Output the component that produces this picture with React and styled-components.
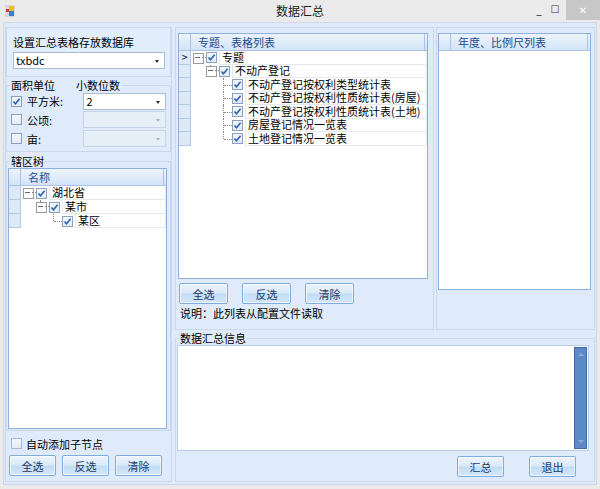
import React from 'react';
import styled, { createGlobalStyle } from 'styled-components';

const GlobalStyle = createGlobalStyle`
  html, body {
    margin: 0;
    padding: 0;
    background: #ebebeb;
  }
  * {
    box-sizing: border-box;
  }
  body {
    font-family: "Noto Sans CJK SC", "Liberation Sans", sans-serif;
    font-size: 11px;
    color: #000;
  }
`;

const Window = styled.div`
  width: 600px;
  height: 489px;
  background: #ebebeb;
  display: flex;
  flex-direction: column;
  padding: 0 3px 4px 3px;
  overflow: hidden;
`;

const TitleBar = styled.div`
  height: 22px;
  display: flex;
  align-items: center;
  position: relative;
  margin: 0 -3px;
  padding-left: 5px;
`;

const Title = styled.div`
  position: absolute;
  left: 0;
  right: 0;
  text-align: center;
  font-size: 12px;
  line-height: 22px;
  color: #222;
  pointer-events: none;
`;

const Controls = styled.div`
  margin-left: auto;
  display: flex;
  align-items: flex-start;
  height: 22px;
`;

const CtrlButton = styled.div`
  width: ${p => p.$wide ? '34px' : '16px'};
  height: ${p => p.$wide ? '20px' : '18px'};
  margin-left: ${p => p.$wide ? '3px' : '0'};
  background: ${p => p.$wide ? '#c7c7c7' : 'transparent'};
  display: flex;
  align-items: center;
  justify-content: center;
  color: ${p => p.$wide ? '#fff' : '#333'};
  font-family: "DejaVu Sans", sans-serif;
  font-size: 10px;
`;

const Client = styled.div`
  flex: 1;
  background: #dfebfa;
  border: 1px solid #cfd9e6;
  display: flex;
  gap: 3px;
  padding: 4px 1px 2px 1px;
`;

const LeftCol = styled.div`
  width: 167px;
  display: flex;
  flex-direction: column;
  border: 1px solid #cbd8ea;
  border-top: none;
  padding: 0 0 5px 0;
`;

const Panel = styled.div`
  border: 1px solid #cbd8ea;
  background: #e3eefc;
  padding: 7px 7px 7px 6px;
  display: flex;
  flex-direction: column;
  gap: 3px;
`;

const Label = styled.div`
  line-height: 14px;
  white-space: nowrap;
`;

const Combo = styled.div`
  height: 17px;
  width: ${p => p.$width || 'auto'};
  background: ${p => p.$disabled ? '#e6eef8' : '#fff'};
  border: 1px solid ${p => p.$disabled ? '#c6d4e6' : '#a9bcd6'};
  display: flex;
  align-items: center;
  padding-left: 2px;
  font-size: 11px;
  line-height: 15px;
  position: relative;

  &::after {
    content: '';
    position: absolute;
    right: 5px;
    top: 7px;
    border-left: 2.5px solid transparent;
    border-right: 2.5px solid transparent;
    border-top: 3px solid ${p => p.$disabled ? '#a9b6c8' : '#2a2a2a'};
  }
`;

const Field = styled.fieldset`
  margin: ${p => p.$mt || '0'} 0 0 0;
  border: 1px solid #cbd8ea;
  padding: ${p => p.$pad || '2px 4px 4px 4px'};
  min-width: 0;
  display: flex;
  flex-direction: column;
  flex: ${p => p.$grow ? 1 : 'none'};
`;

const Legend = styled.legend`
  padding: 0 1px;
  margin-left: ${p => p.$ml ?? 2}px;
  line-height: 14px;
  display: flex;
  gap: 21px;
`;

const UnitRow = styled.div`
  height: ${p => p.$h || '18px'};
  display: flex;
  align-items: center;
`;

const UnitLabel = styled.span`
  width: 66px;
  padding-left: 5px;
  line-height: 14px;
  white-space: nowrap;
`;

const Check = styled.span`
  width: 11px;
  height: 11px;
  flex: none;
  border: 1px solid ${p => p.$light ? '#a7bad3' : '#8aa0bd'};
  background: linear-gradient(#f4f7fb, #e4ebf4);
  display: inline-flex;
  align-items: center;
  justify-content: center;
`;

const Grid = styled.div`
  flex: 1;
  background: #fff;
  border: 1px solid #8eb0dc;
  display: flex;
  flex-direction: column;
  margin: ${p => p.$m || '0'};
  overflow: hidden;
`;

const GridHeader = styled.div`
  height: ${p => p.$h || '17px'};
  display: flex;
  flex: none;
  background: linear-gradient(#edf4fc, #d3e3f7);
  border-bottom: 1px solid #a9c3e6;
`;

const HeaderCorner = styled.div`
  width: 12px;
  border-right: 1px solid #a9c3e6;
  flex: none;
`;

const HeaderCell = styled.div`
  flex: 1;
  color: #1d4c8c;
  line-height: 16px;
  padding-left: 7px;
  border-right: 1px solid #a9c3e6;
  margin-right: 2px;
`;

const Row = styled.div`
  height: ${p => p.$h};
  display: flex;
  flex: none;
`;

const RowHead = styled.div`
  width: 12px;
  flex: none;
  background: #dde9f9;
  border-right: 1px solid #b3c9e7;
  border-bottom: 1px solid #b3c9e7;
  display: flex;
  align-items: center;
  justify-content: center;
  font-family: "DejaVu Sans", sans-serif;
  font-size: 8px;
  color: #2a3c5c;
  font-weight: bold;
`;

const NodeArea = styled.div`
  flex: 1;
  display: flex;
  align-items: center;
  padding-left: ${p => 2 + p.$level * 13}px;
  position: relative;
`;

const Expander = styled.span`
  width: 13px;
  height: 100%;
  flex: none;
  position: relative;

  &::before {
    content: '';
    position: absolute;
    left: 0;
    top: 50%;
    width: 9px;
    height: 9px;
    margin-top: -5px;
    border: 1px solid #9a9a9a;
    background: #fff;
  }
  &::after {
    content: '';
    position: absolute;
    left: 2px;
    top: 50%;
    width: 5px;
    height: 1px;
    margin-top: -1px;
    background: #666;
  }
`;

const ExpDash = styled.span`
  position: absolute;
  left: 9px;
  top: 50%;
  width: 4px;
  margin-top: -1px;
  border-top: 1px dotted #888;
`;

const ExpUp = styled.span`
  position: absolute;
  left: 4px;
  top: 0;
  height: calc(50% - 5px);
  border-left: 1px dotted #888;
`;

const Connector = styled.span`
  width: 13px;
  height: 100%;
  flex: none;
  position: relative;

  &::before {
    content: '';
    position: absolute;
    left: 4px;
    top: 0;
    height: ${p => p.$last ? '50%' : '100%'};
    border-left: 1px dotted #888;
  }
  &::after {
    content: '';
    position: absolute;
    left: 5px;
    top: 50%;
    width: 8px;
    border-top: 1px dotted #888;
  }
`;

const NodeText = styled.div`
  flex: 1;
  height: 100%;
  margin-left: 2px;
  padding-left: 2px;
  display: flex;
  align-items: center;
  border: 1px solid #e4e9f0;
  border-top: none;
  white-space: nowrap;
  line-height: 11px;
`;

const CheckRow = styled.div`
  display: flex;
  align-items: center;
  gap: 4px;
  padding: 6px 0 0 5px;
  height: 19px;
  line-height: 14px;
`;

const ButtonRow = styled.div`
  display: flex;
  gap: ${p => p.$gap || '6px'};
  justify-content: ${p => p.$end ? 'flex-end' : 'flex-start'};
  padding: ${p => p.$pad || '0'};
`;

const Button = styled.div`
  width: ${p => p.$w || '47px'};
  height: 21px;
  border: 1px solid #7fabde;
  border-radius: 2px;
  background: linear-gradient(#eef5fd 0%, #dbe9f9 45%, #c3dcf6 55%, #d4e8fb 100%);
  box-shadow: inset 0 0 0 1px rgba(255, 255, 255, 0.6);
  display: flex;
  align-items: center;
  justify-content: center;
  color: #1c3a6a;
  font-size: 11px;
  line-height: 14px;
`;

const RightArea = styled.div`
  flex: 1;
  display: flex;
  flex-direction: column;
`;

const TopRow = styled.div`
  display: flex;
  gap: 2px;
  height: 303px;
  flex: none;
`;

const MidPanel = styled.div`
  width: 259px;
  border: 1px solid #cbd8ea;
  display: flex;
  flex-direction: column;
`;

const SidePanel = styled.div`
  flex: 1;
  border: 1px solid #cbd8ea;
  display: flex;
  flex-direction: column;
`;

const Note = styled.div`
  line-height: 14px;
  padding: 2px 0 9px 4px;
`;

const InfoBox = styled.div`
  height: 106px;
  background: #fff;
  border: 1px solid #b9cde6;
  display: flex;
  justify-content: flex-end;
  padding: 1px;
`;

const ScrollBar = styled.div`
  width: 13px;
  background: #5d89c6;
  border: 1px solid #3f69a6;
  display: flex;
  flex-direction: column;
  justify-content: space-between;
  align-items: center;
  padding: 5px 0;
`;

const Arrow = styled.span`
  width: 0;
  height: 0;
  border-left: 3px solid transparent;
  border-right: 3px solid transparent;
  ${p => p.$down
    ? 'border-top: 3px solid #8eacd8;'
    : 'border-bottom: 3px solid #8eacd8;'}
`;

const CheckMark = () => (
  <svg width="9" height="9" viewBox="0 0 9 9">
    <path d="M1.5 4.5 L3.5 6.8 L7.6 1.8" fill="none" stroke="#2c62b3" strokeWidth="1.6" />
  </svg>
);

const Box = ({ checked, light }) => (
  <Check $light={light}>{checked && <CheckMark />}</Check>
);

const AppIcon = () => (
  <svg width="10" height="12" viewBox="0 0 10 12">
    <rect x="0" y="0" width="10" height="12" fill="#d8d8d8" />
    <rect x="1" y="4" width="3" height="3" fill="#d23a2a" />
    <rect x="4" y="1" width="5" height="5" fill="#f2c21c" />
    <rect x="4" y="6" width="5" height="5" fill="#3a7bd5" />
  </svg>
);

const TreeNode = ({ level, label, kind, arrow, h }) => (
  <Row $h={h}>
    <RowHead>{arrow ? '>' : ''}</RowHead>
    <NodeArea $level={level}>
      {kind === 'leaf' || kind === 'last' ? (
        <Connector $last={kind === 'last'} />
      ) : (
        <Expander>
          {level > 0 && <ExpUp />}
          <ExpDash />
        </Expander>
      )}
      <Box checked />
      <NodeText>{label}</NodeText>
    </NodeArea>
  </Row>
);

const regionTree = [
  { level: 0, label: '湖北省', kind: 'open' },
  { level: 1, label: '某市', kind: 'open' },
  { level: 2, label: '某区', kind: 'last' },
];

const tableTree = [
  { level: 0, label: '专题', kind: 'open', arrow: true },
  { level: 1, label: '不动产登记', kind: 'open' },
  { level: 2, label: '不动产登记按权利类型统计表', kind: 'leaf' },
  { level: 2, label: '不动产登记按权利性质统计表(房屋)', kind: 'leaf' },
  { level: 2, label: '不动产登记按权利性质统计表(土地)', kind: 'leaf' },
  { level: 2, label: '房屋登记情况一览表', kind: 'leaf' },
  { level: 2, label: '土地登记情况一览表', kind: 'last' },
];

export default function App() {
  return (
    <>
      <GlobalStyle />
      <Window>
        <TitleBar>
          <AppIcon />
          <Title>数据汇总</Title>
          <Controls>
            <CtrlButton>_</CtrlButton>
            <CtrlButton>☐</CtrlButton>
            <CtrlButton $wide>✕</CtrlButton>
          </Controls>
        </TitleBar>
        <Client>
          <LeftCol>
            <Panel>
              <Label>设置汇总表格存放数据库</Label>
              <Combo $width="152px">txbdc</Combo>
            </Panel>
            <Field $mt="1px" $pad="0 4px 3px 4px">
              <Legend $ml={-1}>
                <span>面积单位</span>
                <span>小数位数</span>
              </Legend>
              <UnitRow>
                <Box checked />
                <UnitLabel>平方米:</UnitLabel>
                <Combo $width="89px">2</Combo>
              </UnitRow>
              <UnitRow $h="19px">
                <Box />
                <UnitLabel>公顷:</UnitLabel>
                <Combo $width="89px" $disabled />
              </UnitRow>
              <UnitRow $h="19px">
                <Box />
                <UnitLabel>亩:</UnitLabel>
                <Combo $width="89px" $disabled />
              </UnitRow>
            </Field>
            <Field $mt="2px" $grow $pad="0 3px 1px 1px">
              <Legend>
                <span>辖区树</span>
              </Legend>
              <Grid>
                <GridHeader>
                  <HeaderCorner />
                  <HeaderCell>名称</HeaderCell>
                </GridHeader>
                {regionTree.map(n => (
                  <TreeNode key={n.label} h="14px" {...n} />
                ))}
              </Grid>
            </Field>
            <CheckRow>
              <Box light />
              <span>自动添加子节点</span>
            </CheckRow>
            <ButtonRow $pad="5px 0 0 3px">
              <Button>全选</Button>
              <Button>反选</Button>
              <Button>清除</Button>
            </ButtonRow>
          </LeftCol>
          <RightArea>
            <TopRow>
              <MidPanel>
                <Grid $m="5px 5px 0 2px">
                  <GridHeader>
                    <HeaderCorner />
                    <HeaderCell>专题、表格列表</HeaderCell>
                  </GridHeader>
                  {tableTree.map(n => (
                    <TreeNode key={n.label} h="13.5px" {...n} />
                  ))}
                </Grid>
                <ButtonRow $gap="14px" $pad="4px 0 0 3px">
                  <Button $w="49px">全选</Button>
                  <Button $w="49px">反选</Button>
                  <Button $w="49px">清除</Button>
                </ButtonRow>
                <Note>说明：此列表从配置文件读取</Note>
              </MidPanel>
              <SidePanel>
                <Grid $m="5px 3px 39px 1px">
                  <GridHeader>
                    <HeaderCorner />
                    <HeaderCell>年度、比例尺列表</HeaderCell>
                  </GridHeader>
                </Grid>
              </SidePanel>
            </TopRow>
            <Field $mt="1px" $grow $pad="0 5px 4px 1px">
              <Legend>
                <span>数据汇总信息</span>
              </Legend>
              <InfoBox>
                <ScrollBar>
                  <Arrow />
                  <Arrow $down />
                </ScrollBar>
              </InfoBox>
              <ButtonRow $end $gap="25px" $pad="5px 13px 0 0">
                <Button>汇总</Button>
                <Button>退出</Button>
              </ButtonRow>
            </Field>
          </RightArea>
        </Client>
      </Window>
    </>
  );
}
